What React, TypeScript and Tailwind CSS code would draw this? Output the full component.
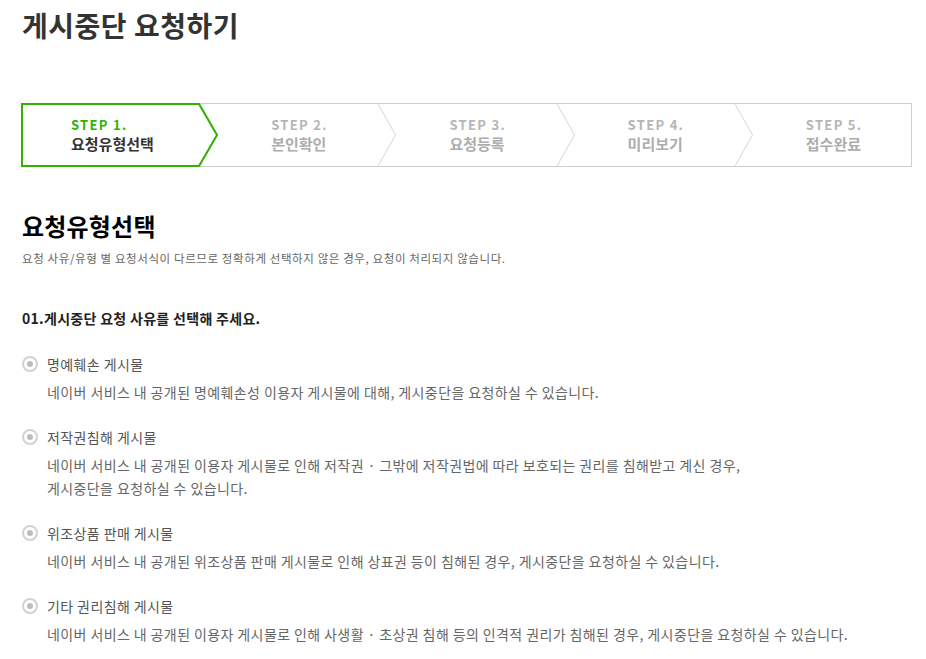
import React from 'react';

const steps = [
    { no: 'STEP 1.', name: '요청유형선택' },
    { no: 'STEP 2.', name: '본인확인' },
    { no: 'STEP 3.', name: '요청등록' },
    { no: 'STEP 4.', name: '미리보기' },
    { no: 'STEP 5.', name: '접수완료' },
];

const reasons = [
    {
        title: '명예훼손 게시물',
        desc: ['네이버 서비스 내 공개된 명예훼손성 이용자 게시물에 대해, 게시중단을 요청하실 수 있습니다.'],
    },
    {
        title: '저작권침해 게시물',
        desc: [
            '네이버 서비스 내 공개된 이용자 게시물로 인해 저작권 · 그밖에 저작권법에 따라 보호되는 권리를 침해받고 계신 경우,',
            '게시중단을 요청하실 수 있습니다.',
        ],
    },
    {
        title: '위조상품 판매 게시물',
        desc: ['네이버 서비스 내 공개된 위조상품 판매 게시물로 인해 상표권 등이 침해된 경우, 게시중단을 요청하실 수 있습니다.'],
    },
    {
        title: '기타 권리침해 게시물',
        desc: ['네이버 서비스 내 공개된 이용자 게시물로 인해 사생활 · 초상권 침해 등의 인격적 권리가 침해된 경우, 게시중단을 요청하실 수 있습니다.'],
    },
];

function StepBar() {
    const seg = 891 / 5;
    return (
        <div className="relative w-[891px] h-[64px] mt-[63px]">
            {/* outline + chevrons */}
            <svg width="891" height="64" viewBox="0 0 891 64" className="absolute inset-0">
                <rect x="0.5" y="0.5" width="890" height="63" fill="none" stroke="#cfcfcf" />
                {[1, 2, 3, 4].map((i) => {
                    const bx = Math.round(seg * i) + 0.5;
                    return (
                        <polyline
                            key={i}
                            points={`${bx},0 ${bx + 18},32 ${bx},64`}
                            fill="none"
                            stroke="#d6d6d6"
                        />
                    );
                })}
                <polygon points="1,1 178,1 196,32 178,63 1,63" fill="#fff" stroke="#2db400" strokeWidth="2" />
            </svg>
            <div className="relative grid grid-cols-5 h-full">
                {steps.map((s, i) => (
                    <div
                        key={s.no}
                        className={`flex flex-col justify-center gap-[3px] ${i === 0 ? 'pl-[50px]' : 'pl-[72px]'}`}
                    >
                        <span className={`text-[13px] leading-[14px] font-bold tracking-[1.3px] ${i === 0 ? 'text-[#2db400]' : 'text-[#b5b5b5]'}`}>
                            {s.no}
                        </span>
                        <span className={`text-[15px] leading-[18px] font-bold ${i === 0 ? 'text-[#333]' : 'text-[#adadad]'}`}>
                            {s.name}
                        </span>
                    </div>
                ))}
            </div>
        </div>
    );
}

function Radio() {
    return (
        <span className="w-[16px] h-[16px] rounded-full border-2 border-[#d2d2d2] flex items-center justify-center shrink-0">
            <span className="w-[6px] h-[6px] rounded-full bg-[#bdbdbd]" />
        </span>
    );
}

export default function App() {
    return (
        <main
            className="min-h-screen bg-white pl-[21px] pr-[14px] pt-[10px]"
            style={{ fontFamily: '"Noto Sans CJK KR", "Noto Sans", sans-serif' }}
        >
            <h1 className="ml-px text-[28px] leading-[30px] font-bold text-[#333] tracking-[0.5px]">게시중단 요청하기</h1>

            <StepBar />

            <section className="ml-px">
                <h2 className="mt-[44px] text-[24px] leading-[30px] font-bold text-black tracking-[0.2px]">요청유형선택</h2>
                <p className="mt-[9px] text-[11.5px] leading-[16px] text-[#666] tracking-[0.6px]">
                    요청 사유/유형 별 요청서식이 다르므로 정확하게 선택하지 않은 경우, 요청이 처리되지 않습니다.
                </p>

                <p className="mt-[42px] text-[14px] leading-[20px] font-bold text-[#222] tracking-[0.3px]">
                    01.게시중단 요청 사유를 선택해 주세요.
                </p>

                <ul className="mt-[26px] flex flex-col gap-[23px]">
                    {reasons.map((r) => (
                        <li key={r.title}>
                            <label className="flex items-center gap-[9px] text-[14px] leading-[20px] text-[#555] tracking-[0.4px]">
                                <Radio />
                                {r.title}
                            </label>
                            <div className="mt-[7px] pl-[25px] text-[14px] leading-[23px] text-[#666] tracking-[0.4px]">
                                {r.desc.map((d) => (
                                    <p key={d}>{d}</p>
                                ))}
                            </div>
                        </li>
                    ))}
                </ul>
            </section>
        </main>
    );
}
